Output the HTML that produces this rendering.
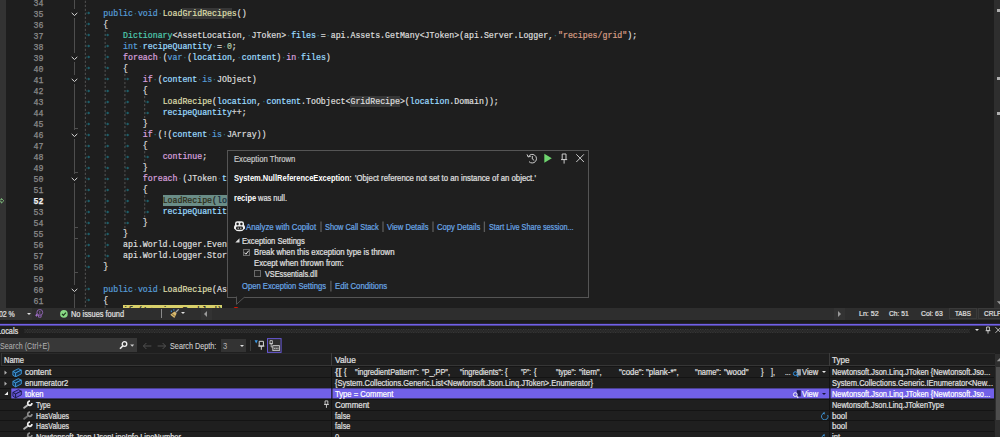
<!DOCTYPE html>
<html lang="en"><head><meta charset="utf-8"><title>Exception Thrown - Locals</title>
<style>
html,body{margin:0;padding:0;background:#1e1e1e;}
body{width:1000px;height:437px;overflow:hidden;position:relative;font-family:"Liberation Sans",sans-serif;}
#ed{position:absolute;left:0;top:0;width:1000px;height:308px;overflow:hidden;background:#1e1e1e;}
.margin{position:absolute;left:0;top:0;width:6px;height:308px;background:#333333;}
.ln{position:absolute;left:0;width:43.5px;text-align:right;font-family:"Liberation Mono",monospace;font-size:8.2437px;line-height:11.03px;height:11.03px;color:#8a8a8a;white-space:pre;-webkit-text-stroke:0.25px currentColor;}
.ln.lncur{color:#f0f0f0;font-weight:bold;}
.code{position:absolute;font-family:"Liberation Mono",monospace;font-size:8.2437px;line-height:11.03px;height:11.03px;white-space:pre;color:#dcdcdc;-webkit-text-stroke:0.22px currentColor;}
.code i{font-style:normal;color:#2a7480;-webkit-text-stroke:0;}
.tab{position:absolute;}
.k{color:#569cd6}.c{color:#d8a0df}.t{color:#4ec9b0}.m{color:#dcdcaa}.v{color:#9cdcfe}.n{color:#b5cea8}.s{color:#d69d85}.p{color:#dcdcdc}
.hl{background:#363636;display:inline-block;height:11.03px;vertical-align:top;}
.cur{background:#6a8d87;color:#1c1c1c;display:inline-block;height:11.03px;vertical-align:top;}
.cm{color:#2c2a14;}.cv{color:#14283a;}
.ylw{background:#d8d06a;color:#1e1e1e;padding-top:1.4px;}
.oline{position:absolute;width:1px;background:#4e4e4e;}
.otick{position:absolute;width:3.5px;height:1px;background:#4e4e4e;}
.chev{position:absolute;}
.guide{position:absolute;width:1px;background:repeating-linear-gradient(to bottom,#525252 0,#525252 2.2px,transparent 2.2px,transparent 4px);}
.vsb{position:absolute;left:994px;top:0;width:6px;height:308px;background:#2e2e2e;}
.vmark{position:absolute;left:997px;width:3px;height:3px;background:#b0b0b0;}
.vsbarrow{position:absolute;left:995px;top:303px;width:0;height:0;border-left:2.5px solid transparent;border-right:2.5px solid transparent;border-top:3px solid #999;}
.tx{position:absolute;transform-origin:0 50%;-webkit-text-stroke:0.22px currentColor;white-space:pre;line-height:12px;height:12px;color:#e0e0e0;}
.b{font-weight:bold;color:#fff;-webkit-text-stroke:0;}
.lk{color:#6aa7e6;}
.dim{color:#c8c8c8;}
.abs{position:absolute;}
.sep{width:1.4px;height:10.6px;background:#595959;}
.cb{width:7px;height:7px;box-sizing:border-box;border:1px solid #6a6a6a;background:#252525;}
.cb svg{position:absolute;left:-1px;top:-1px;}
.tri-d{width:0;height:0;border-left:2.5px solid transparent;border-right:2.5px solid transparent;border-top:2.9px solid #e0e0e0;}
.grip{background-image:radial-gradient(circle,#4a4a4a 0.45px,transparent 0.6px),radial-gradient(circle,#4a4a4a 0.45px,transparent 0.6px);background-size:2px 2px;background-position:0 0,1px 1px;}
.rs{left:0;width:994px;height:1px;background:#141414;}
.sel{color:#fff;}
.gry{color:#b4b4b4;-webkit-text-stroke:0;}
.dim2{color:#cfcfcf;-webkit-text-stroke:0.1px currentColor;}

</style></head><body>
<div id="ed">
<div class="margin"></div>
<svg width="0" height="0" style="position:absolute"><defs><g id="arr"><path d="M0 2 H3.2" stroke="#1e6470" stroke-width="0.7" fill="none"/><path d="M2.2 0.5 L4.3 2 L2.2 3.5 Z" fill="#1f6773"/></g></defs></svg>
<div class="oline" style="left:74px;top:0;height:308px"></div>
<svg class="chev" style="left:70px;top:8.80px" width="9" height="9" viewBox="0 0 9 9"><rect x="0" y="0" width="9" height="9" fill="#1e1e1e"/><path d="M1.7 3.9 L4.5 6.5 L7.3 3.9" fill="none" stroke="#d8d8d8" stroke-width="1"/></svg>
<svg class="chev" style="left:70px;top:52.92px" width="9" height="9" viewBox="0 0 9 9"><rect x="0" y="0" width="9" height="9" fill="#1e1e1e"/><path d="M1.7 3.9 L4.5 6.5 L7.3 3.9" fill="none" stroke="#d8d8d8" stroke-width="1"/></svg>
<svg class="chev" style="left:70px;top:74.98px" width="9" height="9" viewBox="0 0 9 9"><rect x="0" y="0" width="9" height="9" fill="#1e1e1e"/><path d="M1.7 3.9 L4.5 6.5 L7.3 3.9" fill="none" stroke="#d8d8d8" stroke-width="1"/></svg>
<svg class="chev" style="left:70px;top:130.13px" width="9" height="9" viewBox="0 0 9 9"><rect x="0" y="0" width="9" height="9" fill="#1e1e1e"/><path d="M1.7 3.9 L4.5 6.5 L7.3 3.9" fill="none" stroke="#d8d8d8" stroke-width="1"/></svg>
<svg class="chev" style="left:70px;top:174.25px" width="9" height="9" viewBox="0 0 9 9"><rect x="0" y="0" width="9" height="9" fill="#1e1e1e"/><path d="M1.7 3.9 L4.5 6.5 L7.3 3.9" fill="none" stroke="#d8d8d8" stroke-width="1"/></svg>
<svg class="chev" style="left:70px;top:284.55px" width="9" height="9" viewBox="0 0 9 9"><rect x="0" y="0" width="9" height="9" fill="#1e1e1e"/><path d="M1.7 3.9 L4.5 6.5 L7.3 3.9" fill="none" stroke="#d8d8d8" stroke-width="1"/></svg>
<div class="otick" style="left:74px;top:128.11px"></div>
<div class="otick" style="left:74px;top:172.23px"></div>
<div class="otick" style="left:74px;top:227.38px"></div>
<div class="otick" style="left:74px;top:238.41px"></div>
<div class="otick" style="left:74px;top:271.50px"></div>
<svg style="position:absolute;left:0;top:0" width="230" height="308" viewBox="0 0 230 308"><path d="M85.35 -3.24 V327.65 M105.14 29.84 V261.48 M105.14 305.60 V327.65 M124.93 73.96 V228.38 M144.71 96.02 V118.08 M144.71 151.18 V162.20 M144.71 195.30 V217.35" fill="none" stroke="#565656" stroke-width="0.95" stroke-dasharray="2.2 1.8"/></svg>
<div class="ln" style="top:-2.24px">34</div>
<div class="ln" style="top:8.79px">35</div>
<svg class="tab" style="left:85.70px;top:11.30px" width="4.5" height="4" viewBox="0 0 4.5 4"><use href="#arr"/></svg>
<div class="code" style="left:103.29px;top:7.79px"><span class="k">public</span><i>·</i><span class="k">void</span><i>·</i><span class="m">Load</span><span class="m hl">GridRecipe</span><span class="m">s</span><span class="p">()</span></div>
<div class="ln" style="top:19.81px">36</div>
<svg class="tab" style="left:85.70px;top:22.33px" width="4.5" height="4" viewBox="0 0 4.5 4"><use href="#arr"/></svg>
<div class="code" style="left:103.29px;top:18.81px"><span class="p">{</span></div>
<div class="ln" style="top:30.84px">37</div>
<svg class="tab" style="left:85.70px;top:33.36px" width="4.5" height="4" viewBox="0 0 4.5 4"><use href="#arr"/></svg>
<svg class="tab" style="left:105.49px;top:33.36px" width="4.5" height="4" viewBox="0 0 4.5 4"><use href="#arr"/></svg>
<div class="code" style="left:123.08px;top:29.84px"><span class="t">Dictionary</span><span class="p">&lt;AssetLocation,</span><i>·</i><span class="p">JToken&gt;</span><i>·</i><span class="v">files</span><i>·</i><span class="p">=</span><i>·</i><span class="p">api.Assets.GetMany&lt;JToken&gt;(api.Server.Logger,</span><i>·</i><span class="s">"recipes/grid"</span><span class="p">);</span></div>
<div class="ln" style="top:41.88px">38</div>
<svg class="tab" style="left:85.70px;top:44.39px" width="4.5" height="4" viewBox="0 0 4.5 4"><use href="#arr"/></svg>
<svg class="tab" style="left:105.49px;top:44.39px" width="4.5" height="4" viewBox="0 0 4.5 4"><use href="#arr"/></svg>
<div class="code" style="left:123.08px;top:40.88px"><span class="k">int</span><i>·</i><span class="v">recipeQuantity</span><i>·</i><span class="p">=</span><i>·</i><span class="n">0</span><span class="p">;</span></div>
<div class="ln" style="top:52.91px">39</div>
<svg class="tab" style="left:85.70px;top:55.42px" width="4.5" height="4" viewBox="0 0 4.5 4"><use href="#arr"/></svg>
<svg class="tab" style="left:105.49px;top:55.42px" width="4.5" height="4" viewBox="0 0 4.5 4"><use href="#arr"/></svg>
<div class="code" style="left:123.08px;top:51.91px"><span class="c">foreach</span><i>·</i><span class="p">(</span><span class="k">var</span><i>·</i><span class="p">(</span><span class="v">location</span><span class="p">,</span><i>·</i><span class="v">content</span><span class="p">)</span><i>·</i><span class="c">in</span><i>·</i><span class="v">files</span><span class="p">)</span></div>
<div class="ln" style="top:63.94px">40</div>
<svg class="tab" style="left:85.70px;top:66.45px" width="4.5" height="4" viewBox="0 0 4.5 4"><use href="#arr"/></svg>
<svg class="tab" style="left:105.49px;top:66.45px" width="4.5" height="4" viewBox="0 0 4.5 4"><use href="#arr"/></svg>
<div class="code" style="left:123.08px;top:62.94px"><span class="p">{</span></div>
<div class="ln" style="top:74.96px">41</div>
<svg class="tab" style="left:85.70px;top:77.48px" width="4.5" height="4" viewBox="0 0 4.5 4"><use href="#arr"/></svg>
<svg class="tab" style="left:105.49px;top:77.48px" width="4.5" height="4" viewBox="0 0 4.5 4"><use href="#arr"/></svg>
<svg class="tab" style="left:125.28px;top:77.48px" width="4.5" height="4" viewBox="0 0 4.5 4"><use href="#arr"/></svg>
<div class="code" style="left:142.86px;top:73.96px"><span class="c">if</span><i>·</i><span class="p">(</span><span class="v">content</span><i>·</i><span class="k">is</span><i>·</i><span class="p">JObject)</span></div>
<div class="ln" style="top:85.99px">42</div>
<svg class="tab" style="left:85.70px;top:88.51px" width="4.5" height="4" viewBox="0 0 4.5 4"><use href="#arr"/></svg>
<svg class="tab" style="left:105.49px;top:88.51px" width="4.5" height="4" viewBox="0 0 4.5 4"><use href="#arr"/></svg>
<svg class="tab" style="left:125.28px;top:88.51px" width="4.5" height="4" viewBox="0 0 4.5 4"><use href="#arr"/></svg>
<div class="code" style="left:142.86px;top:84.99px"><span class="p">{</span></div>
<div class="ln" style="top:97.02px">43</div>
<svg class="tab" style="left:85.70px;top:99.54px" width="4.5" height="4" viewBox="0 0 4.5 4"><use href="#arr"/></svg>
<svg class="tab" style="left:105.49px;top:99.54px" width="4.5" height="4" viewBox="0 0 4.5 4"><use href="#arr"/></svg>
<svg class="tab" style="left:125.28px;top:99.54px" width="4.5" height="4" viewBox="0 0 4.5 4"><use href="#arr"/></svg>
<svg class="tab" style="left:145.06px;top:99.54px" width="4.5" height="4" viewBox="0 0 4.5 4"><use href="#arr"/></svg>
<div class="code" style="left:162.65px;top:96.02px"><span class="m">LoadRecipe</span><span class="p">(</span><span class="v">location</span><span class="p">,</span><i>·</i><span class="v">content</span><span class="p">.ToObject&lt;</span><span class="p hl">GridRecipe</span><span class="p">&gt;(</span><span class="v">location</span><span class="p">.Domain));</span></div>
<div class="ln" style="top:108.05px">44</div>
<svg class="tab" style="left:85.70px;top:110.57px" width="4.5" height="4" viewBox="0 0 4.5 4"><use href="#arr"/></svg>
<svg class="tab" style="left:105.49px;top:110.57px" width="4.5" height="4" viewBox="0 0 4.5 4"><use href="#arr"/></svg>
<svg class="tab" style="left:125.28px;top:110.57px" width="4.5" height="4" viewBox="0 0 4.5 4"><use href="#arr"/></svg>
<svg class="tab" style="left:145.06px;top:110.57px" width="4.5" height="4" viewBox="0 0 4.5 4"><use href="#arr"/></svg>
<div class="code" style="left:162.65px;top:107.05px"><span class="v">recipeQuantity</span><span class="p">++;</span></div>
<div class="ln" style="top:119.08px">45</div>
<svg class="tab" style="left:85.70px;top:121.60px" width="4.5" height="4" viewBox="0 0 4.5 4"><use href="#arr"/></svg>
<svg class="tab" style="left:105.49px;top:121.60px" width="4.5" height="4" viewBox="0 0 4.5 4"><use href="#arr"/></svg>
<svg class="tab" style="left:125.28px;top:121.60px" width="4.5" height="4" viewBox="0 0 4.5 4"><use href="#arr"/></svg>
<div class="code" style="left:142.86px;top:118.08px"><span class="p">}</span></div>
<div class="ln" style="top:130.12px">46</div>
<svg class="tab" style="left:85.70px;top:132.63px" width="4.5" height="4" viewBox="0 0 4.5 4"><use href="#arr"/></svg>
<svg class="tab" style="left:105.49px;top:132.63px" width="4.5" height="4" viewBox="0 0 4.5 4"><use href="#arr"/></svg>
<svg class="tab" style="left:125.28px;top:132.63px" width="4.5" height="4" viewBox="0 0 4.5 4"><use href="#arr"/></svg>
<div class="code" style="left:142.86px;top:129.12px"><span class="c">if</span><i>·</i><span class="p">(!(</span><span class="v">content</span><i>·</i><span class="k">is</span><i>·</i><span class="p">JArray))</span></div>
<div class="ln" style="top:141.15px">47</div>
<svg class="tab" style="left:85.70px;top:143.66px" width="4.5" height="4" viewBox="0 0 4.5 4"><use href="#arr"/></svg>
<svg class="tab" style="left:105.49px;top:143.66px" width="4.5" height="4" viewBox="0 0 4.5 4"><use href="#arr"/></svg>
<svg class="tab" style="left:125.28px;top:143.66px" width="4.5" height="4" viewBox="0 0 4.5 4"><use href="#arr"/></svg>
<div class="code" style="left:142.86px;top:140.15px"><span class="p">{</span></div>
<div class="ln" style="top:152.18px">48</div>
<svg class="tab" style="left:85.70px;top:154.69px" width="4.5" height="4" viewBox="0 0 4.5 4"><use href="#arr"/></svg>
<svg class="tab" style="left:105.49px;top:154.69px" width="4.5" height="4" viewBox="0 0 4.5 4"><use href="#arr"/></svg>
<svg class="tab" style="left:125.28px;top:154.69px" width="4.5" height="4" viewBox="0 0 4.5 4"><use href="#arr"/></svg>
<svg class="tab" style="left:145.06px;top:154.69px" width="4.5" height="4" viewBox="0 0 4.5 4"><use href="#arr"/></svg>
<div class="code" style="left:162.65px;top:151.18px"><span class="c">continue</span><span class="p">;</span></div>
<div class="ln" style="top:163.21px">49</div>
<svg class="tab" style="left:85.70px;top:165.72px" width="4.5" height="4" viewBox="0 0 4.5 4"><use href="#arr"/></svg>
<svg class="tab" style="left:105.49px;top:165.72px" width="4.5" height="4" viewBox="0 0 4.5 4"><use href="#arr"/></svg>
<svg class="tab" style="left:125.28px;top:165.72px" width="4.5" height="4" viewBox="0 0 4.5 4"><use href="#arr"/></svg>
<div class="code" style="left:142.86px;top:162.21px"><span class="p">}</span></div>
<div class="ln" style="top:174.24px">50</div>
<svg class="tab" style="left:85.70px;top:176.75px" width="4.5" height="4" viewBox="0 0 4.5 4"><use href="#arr"/></svg>
<svg class="tab" style="left:105.49px;top:176.75px" width="4.5" height="4" viewBox="0 0 4.5 4"><use href="#arr"/></svg>
<svg class="tab" style="left:125.28px;top:176.75px" width="4.5" height="4" viewBox="0 0 4.5 4"><use href="#arr"/></svg>
<div class="code" style="left:142.86px;top:173.24px;width:84.14px;overflow:hidden"><span class="c">foreach</span><i>·</i><span class="p">(JToken</span><i>·</i><span class="v">token</span></div>
<div class="ln" style="top:185.27px">51</div>
<svg class="tab" style="left:85.70px;top:187.78px" width="4.5" height="4" viewBox="0 0 4.5 4"><use href="#arr"/></svg>
<svg class="tab" style="left:105.49px;top:187.78px" width="4.5" height="4" viewBox="0 0 4.5 4"><use href="#arr"/></svg>
<svg class="tab" style="left:125.28px;top:187.78px" width="4.5" height="4" viewBox="0 0 4.5 4"><use href="#arr"/></svg>
<div class="code" style="left:142.86px;top:184.27px"><span class="p">{</span></div>
<div class="ln lncur" style="top:196.30px">52</div>
<svg class="tab" style="left:85.70px;top:198.81px" width="4.5" height="4" viewBox="0 0 4.5 4"><use href="#arr"/></svg>
<svg class="tab" style="left:105.49px;top:198.81px" width="4.5" height="4" viewBox="0 0 4.5 4"><use href="#arr"/></svg>
<svg class="tab" style="left:125.28px;top:198.81px" width="4.5" height="4" viewBox="0 0 4.5 4"><use href="#arr"/></svg>
<svg class="tab" style="left:145.06px;top:198.81px" width="4.5" height="4" viewBox="0 0 4.5 4"><use href="#arr"/></svg>
<div class="code" style="left:162.65px;top:195.30px;width:64.35px;overflow:hidden"><span class="cur cm">LoadRecipe</span><span class="cur">(</span><span class="cur cv">location</span></div>
<div class="ln" style="top:207.33px">53</div>
<svg class="tab" style="left:85.70px;top:209.84px" width="4.5" height="4" viewBox="0 0 4.5 4"><use href="#arr"/></svg>
<svg class="tab" style="left:105.49px;top:209.84px" width="4.5" height="4" viewBox="0 0 4.5 4"><use href="#arr"/></svg>
<svg class="tab" style="left:125.28px;top:209.84px" width="4.5" height="4" viewBox="0 0 4.5 4"><use href="#arr"/></svg>
<svg class="tab" style="left:145.06px;top:209.84px" width="4.5" height="4" viewBox="0 0 4.5 4"><use href="#arr"/></svg>
<div class="code" style="left:162.65px;top:206.33px;width:64.35px;overflow:hidden"><span class="v">recipeQuantity</span><span class="p">++;</span></div>
<div class="ln" style="top:218.36px">54</div>
<svg class="tab" style="left:85.70px;top:220.87px" width="4.5" height="4" viewBox="0 0 4.5 4"><use href="#arr"/></svg>
<svg class="tab" style="left:105.49px;top:220.87px" width="4.5" height="4" viewBox="0 0 4.5 4"><use href="#arr"/></svg>
<svg class="tab" style="left:125.28px;top:220.87px" width="4.5" height="4" viewBox="0 0 4.5 4"><use href="#arr"/></svg>
<div class="code" style="left:142.86px;top:217.36px"><span class="p">}</span></div>
<div class="ln" style="top:229.39px">55</div>
<svg class="tab" style="left:85.70px;top:231.90px" width="4.5" height="4" viewBox="0 0 4.5 4"><use href="#arr"/></svg>
<svg class="tab" style="left:105.49px;top:231.90px" width="4.5" height="4" viewBox="0 0 4.5 4"><use href="#arr"/></svg>
<div class="code" style="left:123.08px;top:228.39px"><span class="p">}</span></div>
<div class="ln" style="top:240.42px">56</div>
<svg class="tab" style="left:85.70px;top:242.93px" width="4.5" height="4" viewBox="0 0 4.5 4"><use href="#arr"/></svg>
<svg class="tab" style="left:105.49px;top:242.93px" width="4.5" height="4" viewBox="0 0 4.5 4"><use href="#arr"/></svg>
<div class="code" style="left:123.08px;top:239.42px;width:103.92px;overflow:hidden"><span class="p">api.World.Logger.Event(</span></div>
<div class="ln" style="top:251.45px">57</div>
<svg class="tab" style="left:85.70px;top:253.96px" width="4.5" height="4" viewBox="0 0 4.5 4"><use href="#arr"/></svg>
<svg class="tab" style="left:105.49px;top:253.96px" width="4.5" height="4" viewBox="0 0 4.5 4"><use href="#arr"/></svg>
<div class="code" style="left:123.08px;top:250.45px;width:103.92px;overflow:hidden"><span class="p">api.World.Logger.Story</span></div>
<div class="ln" style="top:262.48px">58</div>
<svg class="tab" style="left:85.70px;top:264.99px" width="4.5" height="4" viewBox="0 0 4.5 4"><use href="#arr"/></svg>
<div class="code" style="left:103.29px;top:261.48px"><span class="p">}</span></div>
<div class="ln" style="top:273.50px">59</div>
<div class="ln" style="top:284.54px">60</div>
<svg class="tab" style="left:85.70px;top:287.05px" width="4.5" height="4" viewBox="0 0 4.5 4"><use href="#arr"/></svg>
<div class="code" style="left:103.29px;top:283.54px;width:123.71px;overflow:hidden"><span class="k">public</span><i>·</i><span class="k">void</span><i>·</i><span class="m">LoadRecipe</span><span class="p">(AssetLocation</span></div>
<div class="ln" style="top:295.56px">61</div>
<svg class="tab" style="left:85.70px;top:298.08px" width="4.5" height="4" viewBox="0 0 4.5 4"><use href="#arr"/></svg>
<div class="code" style="left:103.29px;top:294.56px"><span class="p">{</span></div>
<div class="ln" style="top:306.60px">62</div>
<svg class="tab" style="left:85.70px;top:309.11px" width="4.5" height="4" viewBox="0 0 4.5 4"><use href="#arr"/></svg>
<svg class="tab" style="left:105.49px;top:309.11px" width="4.5" height="4" viewBox="0 0 4.5 4"><use href="#arr"/></svg>
<div class="code" style="left:123.08px;top:305.60px"><span class="ylw">if (!recipe.Enabled)</span></div>
<svg style="position:absolute;left:-0.6px;top:198.41px" width="5.4" height="5.6" viewBox="0 0 5.4 5.6"><path d="M0 1.9 H2.4 V0.5 L4.8 2.8 L2.4 5.1 V3.7 H0 Z" fill="#2a2a2a" stroke="#8dd28a" stroke-width="0.8"/></svg>
<div class="vsb"></div>
<div class="vmark" style="top:9px"></div>
<div class="vmark" style="top:77px"></div>
<div class="vmark" style="top:111.5px"></div>
<svg style="position:absolute;left:994px;top:299px" width="6" height="8" viewBox="0 0 6 8"><path d="M2.8 2.2 H10.2 L6.5 6 Z" fill="#999"/></svg>
</div>
<!-- exception popup -->
<div id="pop" class="abs" style="left:227px;top:150px;width:362.4px;height:147.6px;box-sizing:border-box;border:1px solid #555555;background:#1f1f1f;"></div>
<svg class="abs" style="left:236.3px;top:296px" width="12" height="10" viewBox="0 0 12 10"><path d="M0.5 0.5 V8.3 L8.6 1" fill="#1f1f1f" stroke="#555555" stroke-width="1"/><rect x="1" y="0" width="7.2" height="1.05" fill="#1f1f1f"/></svg>
<div class="abs" style="left:232.7px;top:306.8px;width:6px;height:1.2px;overflow:hidden"><div style="width:6px;height:6px;border-radius:3px;background:#e51400"></div></div>
<!-- popup top-right icons -->
<svg class="abs" style="left:526px;top:152px" width="60" height="13" viewBox="0 0 60 13">
 <g fill="none" stroke="#cccccc" stroke-width="1">
  <path d="M2.4 4.6 A4.3 4.3 0 1 1 3 9.6"/><path d="M1 2.4 L2.2 5 L4.8 4.2"/><path d="M6.3 4 V7 L8.2 8.4"/>
  <path d="M36.2 2 H40 V7.5 H36.2 Z"/><path d="M35 7.6 H41.2"/><path d="M38.1 7.6 V11.6"/>
  <path d="M50.3 2.3 L57.9 10 M57.9 2.3 L50.3 10"/>
 </g>
 <path d="M18.3 1.8 L25.8 6.3 L18.3 10.8 Z" fill="#6fd46f"/>
</svg>
<!-- copilot icon -->
<svg class="abs" style="left:233.6px;top:221px" width="11" height="10.5" viewBox="0 0 11 10.5">
 <path d="M3.4 0.2 H7.6 Q10 0.2 10 2.6 V4 Q11 4.8 11 6.2 V7.4 Q9 10.3 5.5 10.3 Q2 10.3 0 7.4 V6.2 Q0 4.8 1 4 V2.6 Q1 0.2 3.4 0.2 Z" fill="#f0f0f0"/>
 <rect x="2.5" y="1.7" width="2.2" height="2.5" rx="0.7" fill="#1f1f1f"/><rect x="6.3" y="1.7" width="2.2" height="2.5" rx="0.7" fill="#1f1f1f"/>
 <rect x="2" y="5.6" width="7" height="3.2" rx="1.4" fill="#1f1f1f"/>
 <path d="M4.2 6.5 V7.9 M6.8 6.5 V7.9" stroke="#f0f0f0" stroke-width="0.9"/>
</svg>
<!-- link separators -->
<svg class="abs" style="left:227px;top:150px" width="362" height="147" viewBox="227 150 362 147"><g stroke="#5c5c5c" stroke-width="1.3"><path d="M321 221.5 V232 M383 221.5 V232 M433 221.5 V232 M484.4 221.5 V232 M330.9 280.8 V291.4"/></g></svg>
<!-- expander triangle -->
<svg class="abs" style="left:234.5px;top:238px" width="5" height="5" viewBox="0 0 5 5"><path d="M4.5 0.3 V4.5 H0.3 Z" fill="#e0e0e0"/></svg>
<!-- checkboxes -->
<div class="abs cb" style="left:242.5px;top:248.5px"><svg width="7" height="7" viewBox="0 0 7 7"><path d="M1.3 3.6 L2.9 5.2 L5.8 1.6" fill="none" stroke="#f0f0f0" stroke-width="1"/></svg></div>
<div class="abs cb" style="left:254px;top:270px"></div>

<!-- status strip -->
<div class="abs" style="left:0;top:308px;width:1000px;height:11.5px;background:#2e2e2e"></div>
<div class="abs" style="left:0;top:308px;width:32px;height:11.5px;background:#333333"></div>
<div class="abs tri-d" style="left:26.8px;top:312.6px"></div>
<!-- intellicode -->
<svg class="abs" style="left:34.6px;top:309.4px" width="9" height="9" viewBox="0 0 9 9"><g fill="none" stroke="#9566bb" stroke-width="0.9"><circle cx="4.8" cy="3.4" r="2.9"/><path d="M3.5 5.8 V8.2 H6.1 V5.8"/><path d="M4.2 2.6 H5.4 M4.8 2.6 V5.6" stroke-width="0.7"/></g><path d="M1.5 4.2 L2.3 5.7 L3.6 6.1 L2.3 6.7 L1.5 8 L0.9 6.7 L-0.2 6.1 L0.9 5.7 Z" fill="#a06fc8"/></svg>
<!-- ok circle -->
<svg class="abs" style="left:60px;top:309.6px" width="8" height="8" viewBox="0 0 8 8"><circle cx="3.9" cy="3.9" r="3.8" fill="#89d985"/><path d="M2 3.9 L3.4 5.3 L5.9 2.6" fill="none" stroke="#1e3a1e" stroke-width="1.25"/></svg>
<div class="abs" style="left:161px;top:309px;width:1px;height:9px;background:#8a8a8a"></div>
<!-- broom -->
<svg class="abs" style="left:170px;top:309px" width="10" height="10" viewBox="0 0 10 10"><path d="M8.7 0.3 L5.4 3.6" stroke="#a8a8a8" stroke-width="1.3"/><path d="M4.5 2.5 L6.6 4.5 L4.4 8.9 L0.3 5.7 Z" fill="#d9b96c"/><path d="M2.3 5.2 L4.6 6.9" stroke="#3a3320" stroke-width="0.7"/><rect x="0.8" y="1.6" width="1.2" height="1.2" fill="#3a9ae8"/><rect x="3.2" y="0.3" width="1.2" height="1.2" fill="#3a9ae8"/></svg>
<div class="abs tri-d" style="left:181.1px;top:312.2px"></div>
<div class="abs" style="left:201px;top:308px;width:10.5px;height:11.5px;background:#333"></div>
<div class="abs" style="left:204.2px;top:310.8px;width:0;height:0;border-top:3px solid transparent;border-bottom:3px solid transparent;border-right:3.4px solid #9a9a9a"></div>
<div class="abs" style="left:834px;top:308px;width:10.5px;height:11.5px;background:#333"></div>
<div class="abs" style="left:837.8px;top:310.8px;width:0;height:0;border-top:3px solid transparent;border-bottom:3px solid transparent;border-left:3.4px solid #999"></div>
<div class="abs" style="left:949px;top:308px;width:28px;height:11px;box-sizing:border-box;border:1px solid #3a3a3a"></div>
<div class="abs" style="left:978px;top:308px;width:28px;height:11px;box-sizing:border-box;border:1px solid #3a3a3a"></div>
<!-- gap + purple line -->
<div class="abs" style="left:0;top:319.5px;width:1000px;height:4px;background:#1b1b1b"></div>
<svg class="abs" style="left:0;top:322px" width="1000" height="5" viewBox="0 0 1000 5"><rect x="0" y="1.85" width="1000" height="1.75" fill="#7160e8"/></svg>
<!-- locals panel -->
<div class="abs" style="left:0;top:326px;width:1000px;height:111px;background:#1f1f1f"></div>
<svg class="abs" style="left:22.8px;top:328.6px" width="948" height="4.2" viewBox="0 0 948 4.2"><defs><pattern id="gp" width="2.5" height="2.8" patternUnits="userSpaceOnUse"><rect x="0" y="0" width="1.1" height="1.1" fill="#404040"/><rect x="1.25" y="1.4" width="1.1" height="1.1" fill="#404040"/></pattern></defs><rect width="948" height="4.2" fill="url(#gp)"/></svg>
<div class="abs tri-d" style="left:975.2px;top:329.1px;border-top-color:#e0e0e0"></div>
<svg class="abs" style="left:984px;top:326.1px" width="16" height="9" viewBox="0 0 16 9"><g fill="none" stroke="#d0d0d0" stroke-width="0.9"><path d="M2.6 1 H5.4 V4.6 H2.6 Z M1.6 4.7 H6.4 M4 4.7 V7.6"/><path d="M11.5 1.2 L17 6.8 M17 1.2 L11.5 6.8"/></g></svg>
<!-- search box -->
<div class="abs" style="left:0;top:338px;width:137px;height:14px;background:#383838"></div>
<svg class="abs" style="left:118px;top:340px" width="20" height="11" viewBox="0 0 20 11"><circle cx="6.5" cy="4" r="2.3" fill="none" stroke="#f0f0f0" stroke-width="1.3"/><path d="M4.9 5.7 L2 8.8" stroke="#f0f0f0" stroke-width="1.6"/><path d="M12.2 4.6 H16.2 L14.2 6.8 Z" fill="#d0d0d0"/></svg>
<!-- nav arrows -->
<svg class="abs" style="left:143px;top:341px" width="24" height="10" viewBox="0 0 24 10"><g fill="none" stroke="#505050" stroke-width="1"><path d="M8.4 5 H0.4 M3.4 2 L0.4 5 L3.4 8"/><path d="M14.6 5 H22.6 M19.6 2 L22.6 5 L19.6 8"/></g></svg>
<!-- depth combo -->
<div class="abs" style="left:221px;top:339px;width:25px;height:13px;background:#333333"></div>
<div class="abs tri-d" style="left:239.5px;top:344.5px"></div>
<div class="abs" style="left:250px;top:340px;width:1px;height:11px;background:#3c3c3c"></div>
<svg class="abs" style="left:254px;top:338px" width="28" height="15" viewBox="0 0 28 15">
 <path d="M0.6 2.3 H3.8 L2.2 5.6 Z" fill="#3a9ae8"/>
 <g fill="none" stroke="#d8d8d8" stroke-width="1"><path d="M5.2 3.3 H9.4 V8 H5.2 Z M4.2 8.1 H10.4 M7.3 8.1 V11.8"/></g>
 <rect x="13.5" y="0.6" width="13.6" height="13.8" fill="#2e2e2e" stroke="#6657d2" stroke-width="1"/>
 <g fill="none" stroke="#d0d0d0" stroke-width="0.8"><path d="M16 2.6 H18.4 V5.6 H16 Z M15.4 5.7 H19 M17.2 5.7 V9"/><path d="M17.2 9 H19"/><rect x="18.8" y="7.6" width="6.8" height="5" fill="#555"/><path d="M20 10.4 H24.4" stroke-dasharray="1.2 0.5"/></g>
</svg>
<!-- header row -->

<div class="abs" style="left:1px;top:353px;width:994px;height:1px;background:#2a2a2a"></div><div class="abs" style="left:1px;top:365px;width:994px;height:1px;background:#363636"></div><div class="abs" style="left:1px;top:353px;width:1px;height:13px;background:#363636"></div><div class="abs" style="left:0;top:366px;width:995px;height:1px;background:#161616"></div>
<div class="abs" style="left:331px;top:353px;width:1px;height:13.3px;background:#3c3c3c"></div><div class="abs" style="left:331px;top:367.3px;width:1px;height:70px;background:#121212"></div>
<div class="abs" style="left:829px;top:353px;width:1px;height:13.3px;background:#3c3c3c"></div><div class="abs" style="left:829px;top:367.3px;width:1px;height:70px;background:#121212"></div>
<!-- row separators -->
<div class="abs rs" style="top:377.1px"></div>
<div class="abs rs" style="top:387.9px"></div>
<div class="abs rs" style="top:398.7px"></div>
<div class="abs rs" style="top:409.5px"></div>
<div class="abs rs" style="top:420.3px"></div>
<div class="abs rs" style="top:431.1px"></div>
<!-- selected row -->
<svg class="abs" style="left:0;top:387px" width="1000" height="13" viewBox="0 0 1000 13"><rect x="11.3" y="1.4" width="320" height="10" fill="#7160e8"/><rect x="332.5" y="1.4" width="496.8" height="10" fill="#7160e8"/><rect x="830.5" y="1.4" width="163.5" height="10" fill="#7160e8"/></svg>
<!-- expanders -->
<svg class="abs" style="left:4px;top:369.7px" width="4" height="5.4" viewBox="0 0 4 5.4"><path d="M0.5 0.6 L3 2.7 L0.5 4.8 Z" fill="#b0b0b0"/></svg>
<svg class="abs" style="left:4px;top:380.5px" width="4" height="5.4" viewBox="0 0 4 5.4"><path d="M0.5 0.6 L3 2.7 L0.5 4.8 Z" fill="#b0b0b0"/></svg>
<svg class="abs" style="left:3.8px;top:391px" width="4.4" height="4.4" viewBox="0 0 4.4 4.4"><path d="M4.2 0.2 V4.2 H0.2 Z" fill="#f0f0f0"/></svg>
<!-- cube icons -->
<svg class="abs" style="left:12.2px;top:367.6px" width="10" height="9.5" viewBox="0 0 10 9.5"><use href="#cube" stroke="#3f9be0" fill="#14324c"/></svg>
<svg class="abs" style="left:12.2px;top:378.4px" width="10" height="9.5" viewBox="0 0 10 9.5"><use href="#cube" stroke="#3f9be0" fill="#14324c"/></svg>
<svg class="abs" style="left:12.2px;top:389.2px" width="10" height="9.5" viewBox="0 0 10 9.5"><use href="#cube" stroke="#1a1a48" fill="#6253d0"/></svg>
<svg width="0" height="0" style="position:absolute"><defs>
 <g id="cube" stroke-width="0.9" stroke-linejoin="round"><path d="M0.9 3.4 L6.4 0.7 L9.3 2.1 L3.6 5 Z"/><path d="M0.9 3.4 L3.6 5 V8.8 L0.9 7.2 Z"/><path d="M3.6 5 L9.3 2.1 V5.9 L3.6 8.8 Z"/></g>
 <g id="wrench" fill="none" stroke-linecap="round"><path d="M5.2 5 L1 8.3" stroke-width="2" opacity="0.72"/><path d="M9.09 3.2 A2.2 2.2 0 1 1 7.1 1.21" stroke-width="1.8" stroke-linecap="butt"/></g>
 <g id="refresh" fill="none" stroke="#3f9be0" stroke-width="0.9"><path d="M4.2 1.2 A3.3 3.3 0 1 0 7.4 3"/><path d="M4.2 -0.3 V2.7 L2.4 1.2 Z" fill="#3f9be0" stroke="none"/></g>
</defs></svg>
<!-- wrench icons -->
<svg class="abs" style="left:23px;top:399.8px" width="10" height="9" viewBox="0 0 10 9.5"><use href="#wrench" stroke="#f0f0f0"/></svg>
<svg class="abs" style="left:23px;top:410.6px" width="10" height="9" viewBox="0 0 10 9.5"><use href="#wrench" stroke="#8c8c8c"/></svg>
<svg class="abs" style="left:23px;top:421.4px" width="10" height="9" viewBox="0 0 10 9.5"><use href="#wrench" stroke="#f0f0f0"/></svg>
<svg class="abs" style="left:23px;top:432.2px" width="10" height="9" viewBox="0 0 10 9.5"><use href="#wrench" stroke="#8c8c8c"/></svg>
<!-- value column icons -->
<svg class="abs" style="left:792px;top:367.6px" width="10" height="10" viewBox="0 0 10 10"><rect x="4.8" y="1.2" width="4" height="6.2" fill="#b4b4b4"/><path d="M6.2 1.2 V7.4 M7.6 1.2 V7.4" stroke="#8a8a8a" stroke-width="0.5"/><circle cx="3.3" cy="5.6" r="1.9" fill="#1f1f1f" stroke="#2f8fe0" stroke-width="1"/><path d="M4.7 7.1 L6.2 8.8" stroke="#2f8fe0" stroke-width="1.1"/></svg>
<div class="abs tri-d" style="left:822px;top:371px;border-top-color:#e8e8e8"></div>
<svg class="abs" style="left:792px;top:389.2px" width="10" height="10" viewBox="0 0 10 10"><rect x="4.8" y="1.2" width="4" height="6.2" fill="#241e5e"/><circle cx="3.3" cy="5.6" r="1.9" fill="#7160e8" stroke="#f4f4f4" stroke-width="1"/><path d="M4.7 7.1 L6.2 8.8" stroke="#f4f4f4" stroke-width="1.1"/></svg>
<div class="abs tri-d" style="left:822px;top:392.6px;border-top-color:#15123a"></div>
<svg class="abs" style="left:322.6px;top:400.4px" width="6.9" height="9.2" viewBox="0 0 6 8"><g fill="none" stroke="#d0d0d0" stroke-width="0.8"><path d="M1.8 0.8 H4.2 V3.8 H1.8 Z M0.9 3.9 H5.1 M3 3.9 V6.8"/></g></svg>
<svg class="abs" style="left:819.5px;top:411px" width="9" height="9" viewBox="0 0 9 9"><use href="#refresh" transform="translate(0.3,1)"/></svg>
<svg class="abs" style="left:819.5px;top:432.6px" width="9" height="9" viewBox="0 0 9 9"><use href="#refresh" transform="translate(0.3,1)"/></svg>
<!-- locals scrollbar -->
<div class="abs" style="left:995px;top:353.6px;width:5px;height:84px;background:#2e2e2e"></div>
<svg class="abs" style="left:995px;top:356px" width="5" height="7" viewBox="0 0 5 7"><path d="M1.8 5.2 L5.5 1.5 L9.2 5.2 Z" fill="#999"/></svg>
<div class="abs" style="left:996.3px;top:367.4px;width:3.7px;height:52.3px;background:#4d4d4d"></div>

<span id="t0" class="tx dim" style="left:233.60px;top:153.30px;font-size:8.8px;transform:scaleX(0.8724);">Exception Thrown</span>
<span id="t1" class="tx b" style="left:233.60px;top:171.70px;font-size:8.8px;transform:scaleX(0.8544);">System.NullReferenceException:</span>
<span id="t2" class="tx " style="left:354.60px;top:171.70px;font-size:8.8px;transform:scaleX(0.8831);">'Object reference not set to an instance of an object.'</span>
<span id="t3" class="tx b" style="left:233.80px;top:192.30px;font-size:8.8px;transform:scaleX(0.8564);">recipe</span>
<span id="t4" class="tx " style="left:258.40px;top:192.30px;font-size:8.8px;transform:scaleX(0.8471);">was null.</span>
<span id="t5" class="tx lk" style="left:246.40px;top:221.00px;font-size:8.8px;transform:scaleX(0.8849);">Analyze with Copilot</span>
<span id="t6" class="tx lk" style="left:324.90px;top:221.00px;font-size:8.8px;transform:scaleX(0.8382);">Show Call Stack</span>
<span id="t7" class="tx lk" style="left:387.00px;top:221.00px;font-size:8.8px;transform:scaleX(0.8622);">View Details</span>
<span id="t8" class="tx lk" style="left:437.00px;top:221.00px;font-size:8.8px;transform:scaleX(0.8682);">Copy Details</span>
<span id="t9" class="tx lk" style="left:488.70px;top:221.00px;font-size:8.8px;transform:scaleX(0.8229);">Start Live Share session...</span>
<span id="t10" class="tx " style="left:242.00px;top:235.00px;font-size:8.8px;transform:scaleX(0.8631);">Exception Settings</span>
<span id="t11" class="tx " style="left:253.70px;top:246.20px;font-size:8.8px;transform:scaleX(0.8814);">Break when this exception type is thrown</span>
<span id="t12" class="tx " style="left:253.70px;top:257.30px;font-size:8.8px;transform:scaleX(0.8810);">Except when thrown from:</span>
<span id="t13" class="tx " style="left:264.90px;top:267.70px;font-size:8.8px;transform:scaleX(0.8307);">VSEssentials.dll</span>
<span id="t14" class="tx lk" style="left:242.40px;top:280.20px;font-size:8.8px;transform:scaleX(0.8685);">Open Exception Settings</span>
<span id="t15" class="tx lk" style="left:334.90px;top:280.20px;font-size:8.8px;transform:scaleX(0.8805);">Edit Conditions</span>
<span id="t16" class="tx " style="left:-4.60px;top:307.90px;font-size:8.8px;transform:scaleX(0.7935);">102 %</span>
<span id="t17" class="tx " style="left:71.00px;top:307.90px;font-size:8.6px;transform:scaleX(0.8600);">No issues found</span>
<span id="t18" class="tx " style="left:858.60px;top:307.90px;font-size:7.7px;transform:scaleX(0.9170);">Ln: 52</span>
<span id="t19" class="tx " style="left:889.40px;top:307.90px;font-size:7.7px;transform:scaleX(0.8651);">Ch: 51</span>
<span id="t20" class="tx " style="left:921.30px;top:307.90px;font-size:7.7px;transform:scaleX(0.8908);">Col: 63</span>
<span id="t21" class="tx " style="left:955.20px;top:307.90px;font-size:7.7px;transform:scaleX(0.8096);">TABS</span>
<span id="t22" class="tx " style="left:983.60px;top:307.90px;font-size:7.7px;transform:scaleX(0.8467);">CRLF</span>
<span id="t23" class="tx " style="left:-3.20px;top:325.20px;font-size:8.8px;transform:scaleX(0.8334);">Locals</span>
<span id="t24" class="tx gry" style="left:0.00px;top:339.50px;font-size:8.8px;transform:scaleX(0.8148);">Search (Ctrl+E)</span>
<span id="t25" class="tx dim2" style="left:170.40px;top:339.90px;font-size:8.8px;transform:scaleX(0.8249);">Search Depth:</span>
<span id="t26" class="tx gry" style="left:223.20px;top:339.90px;font-size:8.8px;transform:scaleX(0.8600);">3</span>
<span id="t27" class="tx " style="left:4.00px;top:354.10px;font-size:8.8px;transform:scaleX(0.8522);">Name</span>
<span id="t28" class="tx " style="left:334.70px;top:354.10px;font-size:8.8px;transform:scaleX(0.9515);">Value</span>
<span id="t29" class="tx " style="left:832.00px;top:354.10px;font-size:8.8px;transform:scaleX(0.9173);">Type</span>
<span id="t30" class="tx " style="left:24.80px;top:366.40px;font-size:8.8px;transform:scaleX(0.9044);">content</span>
<span id="t31" class="tx " style="left:24.80px;top:377.20px;font-size:8.8px;transform:scaleX(0.8659);">enumerator2</span>
<span id="t32" class="tx sel" style="left:25.00px;top:388.00px;font-size:8.8px;transform:scaleX(0.8639);">token</span>
<span id="t33" class="tx " style="left:36.00px;top:398.80px;font-size:8.8px;transform:scaleX(0.7653);">Type</span>
<span id="t34" class="tx " style="left:36.00px;top:409.60px;font-size:8.8px;transform:scaleX(0.7878);">HasValues</span>
<span id="t35" class="tx " style="left:36.00px;top:420.40px;font-size:8.8px;transform:scaleX(0.7878);">HasValues</span>
<span id="t36" class="tx " style="left:36.00px;top:431.20px;font-size:8.8px;transform:scaleX(0.8521);">Newtonsoft.Json.IJsonLineInfo.LineNumber</span>
<span id="t37" class="tx " style="left:334.70px;top:366.40px;font-size:8.8px;transform:scaleX(1.2243);">{[</span>
<span id="t38" class="tx " style="left:343.60px;top:366.40px;font-size:8.8px;transform:scaleX(0.8600);">{</span>
<span id="t39" class="tx " style="left:355.30px;top:366.40px;font-size:8.8px;transform:scaleX(0.8414);">"ingredientPattern":</span>
<span id="t40" class="tx " style="left:421.80px;top:366.40px;font-size:8.8px;transform:scaleX(0.8323);">"P_,PP",</span>
<span id="t41" class="tx " style="left:459.50px;top:366.40px;font-size:8.8px;transform:scaleX(0.8331);">"ingredients":</span>
<span id="t42" class="tx " style="left:505.30px;top:366.40px;font-size:8.8px;transform:scaleX(0.8600);">{</span>
<span id="t43" class="tx " style="left:521.20px;top:366.40px;font-size:8.8px;transform:scaleX(0.6730);">"P":</span>
<span id="t44" class="tx " style="left:534.20px;top:366.40px;font-size:8.8px;transform:scaleX(0.8600);">{</span>
<span id="t45" class="tx " style="left:555.80px;top:366.40px;font-size:8.8px;transform:scaleX(0.7817);">"type":</span>
<span id="t46" class="tx " style="left:579.00px;top:366.40px;font-size:8.8px;transform:scaleX(0.8968);">"item",</span>
<span id="t47" class="tx " style="left:618.50px;top:366.40px;font-size:8.8px;transform:scaleX(0.8896);">"code":</span>
<span id="t48" class="tx " style="left:645.70px;top:366.40px;font-size:8.8px;transform:scaleX(0.9036);">"plank-*",</span>
<span id="t49" class="tx " style="left:694.50px;top:366.40px;font-size:8.8px;transform:scaleX(0.8501);">"name":</span>
<span id="t50" class="tx " style="left:724.40px;top:366.40px;font-size:8.8px;transform:scaleX(0.8981);">"wood"</span>
<span id="t51" class="tx " style="left:761.00px;top:366.40px;font-size:8.8px;transform:scaleX(0.8600);">}</span>
<span id="t52" class="tx " style="left:771.00px;top:366.40px;font-size:8.8px;transform:scaleX(0.8179);">],</span>
<span id="t53" class="tx " style="left:784.50px;top:366.40px;font-size:8.8px;transform:scaleX(0.7489);">...</span>
<span id="t54" class="tx " style="left:802.00px;top:366.40px;font-size:8.8px;transform:scaleX(0.8562);">View</span>
<span id="t55" class="tx " style="left:334.70px;top:377.20px;font-size:8.8px;transform:scaleX(0.8507);">{System.Collections.Generic.List&lt;Newtonsoft.Json.Linq.JToken&gt;.Enumerator}</span>
<span id="t56" class="tx sel" style="left:334.70px;top:388.00px;font-size:8.8px;transform:scaleX(0.8686);">Type = Comment</span>
<span id="t57" class="tx sel" style="left:802.00px;top:388.00px;font-size:8.8px;transform:scaleX(0.8562);">View</span>
<span id="t58" class="tx " style="left:334.70px;top:398.80px;font-size:8.8px;transform:scaleX(0.8993);">Comment</span>
<span id="t59" class="tx " style="left:334.70px;top:409.60px;font-size:8.8px;transform:scaleX(0.8229);">false</span>
<span id="t60" class="tx " style="left:334.70px;top:420.40px;font-size:8.8px;transform:scaleX(0.8229);">false</span>
<span id="t61" class="tx " style="left:334.70px;top:431.20px;font-size:8.8px;transform:scaleX(0.8600);">0</span>
<span id="t62" class="tx " style="left:832.00px;top:366.40px;font-size:8.8px;transform:scaleX(0.8447);">Newtonsoft.Json.Linq.JToken {Newtonsoft.Jso...</span>
<span id="t63" class="tx " style="left:832.00px;top:377.20px;font-size:8.8px;transform:scaleX(0.8542);">System.Collections.Generic.IEnumerator&lt;New...</span>
<span id="t64" class="tx sel" style="left:832.00px;top:388.00px;font-size:8.8px;transform:scaleX(0.8447);">Newtonsoft.Json.Linq.JToken {Newtonsoft.Jso...</span>
<span id="t65" class="tx " style="left:832.00px;top:398.80px;font-size:8.8px;transform:scaleX(0.8390);">Newtonsoft.Json.Linq.JTokenType</span>
<span id="t66" class="tx " style="left:832.00px;top:409.60px;font-size:8.8px;transform:scaleX(0.9014);">bool</span>
<span id="t67" class="tx " style="left:832.00px;top:420.40px;font-size:8.8px;transform:scaleX(0.9014);">bool</span>
<span id="t68" class="tx " style="left:832.00px;top:431.20px;font-size:8.8px;transform:scaleX(0.8600);">int</span>
</body></html>
